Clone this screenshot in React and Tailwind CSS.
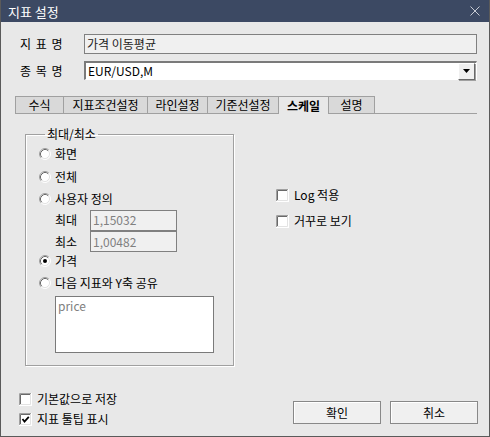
import React from "react";

function Radio({ checked }) {
  return (
    <svg width="12" height="12" viewBox="0 0 12 12" className="shrink-0">
      <circle cx="6" cy="6" r="5" fill="#fff" />
      <path d="M2.11 9.89 A5.5 5.5 0 0 1 9.89 2.11" fill="none" stroke="#a0a0a0" />
      <path d="M2.82 9.18 A4.5 4.5 0 0 1 9.18 2.82" fill="none" stroke="#696969" />
      <path d="M9.89 2.11 A5.5 5.5 0 0 1 2.11 9.89" fill="none" stroke="#ffffff" />
      <path d="M9.18 2.82 A4.5 4.5 0 0 1 2.82 9.18" fill="none" stroke="#e3e3e3" />
      {checked && <circle cx="6" cy="6" r="2" fill="#000" />}
    </svg>
  );
}

function Check({ checked }) {
  return (
    <svg width="13" height="13" viewBox="0 0 13 13" className="shrink-0">
      <rect x="0" y="0" width="13" height="13" fill="#fff" />
      <path d="M0.5 12 V0.5 H12" fill="none" stroke="#a0a0a0" />
      <path d="M1.5 11 V1.5 H11" fill="none" stroke="#696969" />
      <path d="M0 12.5 H12.5 V0" fill="none" stroke="#ffffff" />
      <path d="M1 11.5 H11.5 V1" fill="none" stroke="#e3e3e3" />
      {checked && (
        <path d="M3.5 6 L5.5 8.5 L9.8 3.8" fill="none" stroke="#000" strokeWidth="1.8" />
      )}
    </svg>
  );
}

const tabs = [
  { label: "수식", w: "w-[48px]" },
  { label: "지표조건설정", w: "w-[84px]" },
  { label: "라인설정", w: "w-[60px]" },
  { label: "기준선설정", w: "w-[71px]" },
  { label: "스케일", w: "w-[50px]", active: true },
  { label: "설명", w: "w-[47px]", last: true },
];

export default function App() {
  return (
    <div className="w-[490px] h-[437px] bg-[#e8e8e8] border-x border-b border-[#5a5a5a] flex flex-col text-[12px] leading-none text-black font-['Noto_Sans_CJK_KR',sans-serif] overflow-hidden">
      {/* Title bar */}
      <div className="h-[22px] shrink-0 bg-[#3c4963] flex items-center justify-between pl-[7px] pr-[9px]">
        <span className="text-white text-[13px]">지표 설정</span>
        <svg width="10" height="10" viewBox="0 0 10 10">
          <path d="M0.5 0.5 L9.5 9.5 M9.5 0.5 L0.5 9.5" stroke="#c8ccd4" strokeWidth="1" />
        </svg>
      </div>

      {/* Indicator name */}
      <div className="mt-[12px] pl-[19px] flex items-center h-[20px]">
        <span className="w-[64px] [word-spacing:2px]">지 표 명</span>
        <div className="w-[393px] h-[20px] bg-[#f0f0f0] border border-[#808080] flex items-center pl-[2px] text-[#222]">
          가격 이동평균
        </div>
      </div>

      {/* Symbol name */}
      <div className="mt-[7px] pl-[19px] flex items-center h-[19px]">
        <span className="w-[64px] [word-spacing:2px]">종 목 명</span>
        <div className="w-[393px] h-[19px] bg-white border-t-2 border-l-2 border-[#7a7a7a] border-b border-r border-b-white border-r-white flex items-center">
          <span className="flex-1 pl-[2px]">EUR/USD,M</span>
          <div className="w-[17px] h-[17px] bg-[#f0f0f0] border border-white border-r-[#696969] border-b-[#696969] shadow-[1px_1px_0_#a0a0a0] flex items-center justify-center mr-[1px]">
            <svg width="7" height="4" viewBox="0 0 7 4">
              <path d="M0 0 H7 L3.5 4 Z" fill="#000" />
            </svg>
          </div>
        </div>
      </div>

      {/* Tabs */}
      <div className="mt-[16px] pl-[14px] flex h-[18px]">
        {tabs.map((t) => (
          <div
            key={t.label}
            className={`${t.w} flex items-center justify-center border-t border-l border-[#a0a0a0] ${t.last ? "border-r" : ""} ${
              t.active ? "bg-[#e8e8e8] font-bold" : "bg-[#d9d9d9] border-b"
            }`}
          >
            {t.label}
          </div>
        ))}
        <div className="w-[102px] border-b border-[#a0a0a0]" />
      </div>

      {/* Scale page */}
      <div className="flex mt-[12px]">
        <fieldset className="ml-[24px] w-[209px] h-[240px] border border-[#a0a0a0] shadow-[1px_1px_0_#fff,inset_1px_1px_0_#fff] pl-[13px]">
          <legend className="ml-[6px] px-[2px] leading-[16px]">최대/최소</legend>
          <div className="flex items-center gap-[4px] h-[23px]">
            <Radio />
            <span>화면</span>
          </div>
          <div className="flex items-center gap-[4px] h-[23px]">
            <Radio />
            <span>전체</span>
          </div>
          <div className="flex items-center gap-[4px] h-[21px]">
            <Radio />
            <span>사용자 정의</span>
          </div>
          <div className="flex items-center pl-[16px] h-[22px]">
            <span className="w-[35px]">최대</span>
            <div className="w-[87px] h-[21px] bg-[#f0f0f0] border border-[#808080] flex items-center pl-[2px] text-[#808080]">
              1,15032
            </div>
          </div>
          <div className="flex items-center pl-[16px] h-[21px]">
            <span className="w-[35px]">최소</span>
            <div className="w-[87px] h-[21px] bg-[#f0f0f0] border border-[#808080] flex items-center pl-[2px] text-[#808080]">
              1,00482
            </div>
          </div>
          <div className="flex items-center gap-[4px] h-[18px]">
            <Radio checked />
            <span>가격</span>
          </div>
          <div className="flex items-center gap-[4px] h-[26px]">
            <Radio />
            <span>다음 지표와 Y축 공유</span>
          </div>
          <div className="ml-[16px] w-[159px] h-[57px] bg-white border border-[#7a7a7a] pl-[2px] pt-[3px] text-[#808080]">
            price
          </div>
        </fieldset>

        <div className="ml-[42px] pt-[56px] flex flex-col">
          <div className="flex items-center gap-[5px] h-[26px]">
            <Check />
            <span>Log 적용</span>
          </div>
          <div className="flex items-center gap-[5px] h-[26px]">
            <Check />
            <span>거꾸로 보기</span>
          </div>
        </div>
      </div>

      {/* Bottom */}
      <div className="mt-[23px] pl-[18px] pr-[11px] flex justify-between items-start">
        <div className="flex flex-col">
          <div className="flex items-center gap-[5px] h-[20px]">
            <Check />
            <span>기본값으로 저장</span>
          </div>
          <div className="flex items-center gap-[5px] h-[20px]">
            <Check checked />
            <span>지표 툴팁 표시</span>
          </div>
        </div>
        <div className="mt-[12px] flex gap-[9px]">
          <button className="w-[88px] h-[23px] bg-[#f0f0f0] border border-[#888] shadow-[inset_1px_1px_0_#fff] flex items-center justify-center">
            확인
          </button>
          <button className="w-[88px] h-[23px] bg-[#f0f0f0] border border-[#888] shadow-[inset_1px_1px_0_#fff] flex items-center justify-center">
            취소
          </button>
        </div>
      </div>
    </div>
  );
}
